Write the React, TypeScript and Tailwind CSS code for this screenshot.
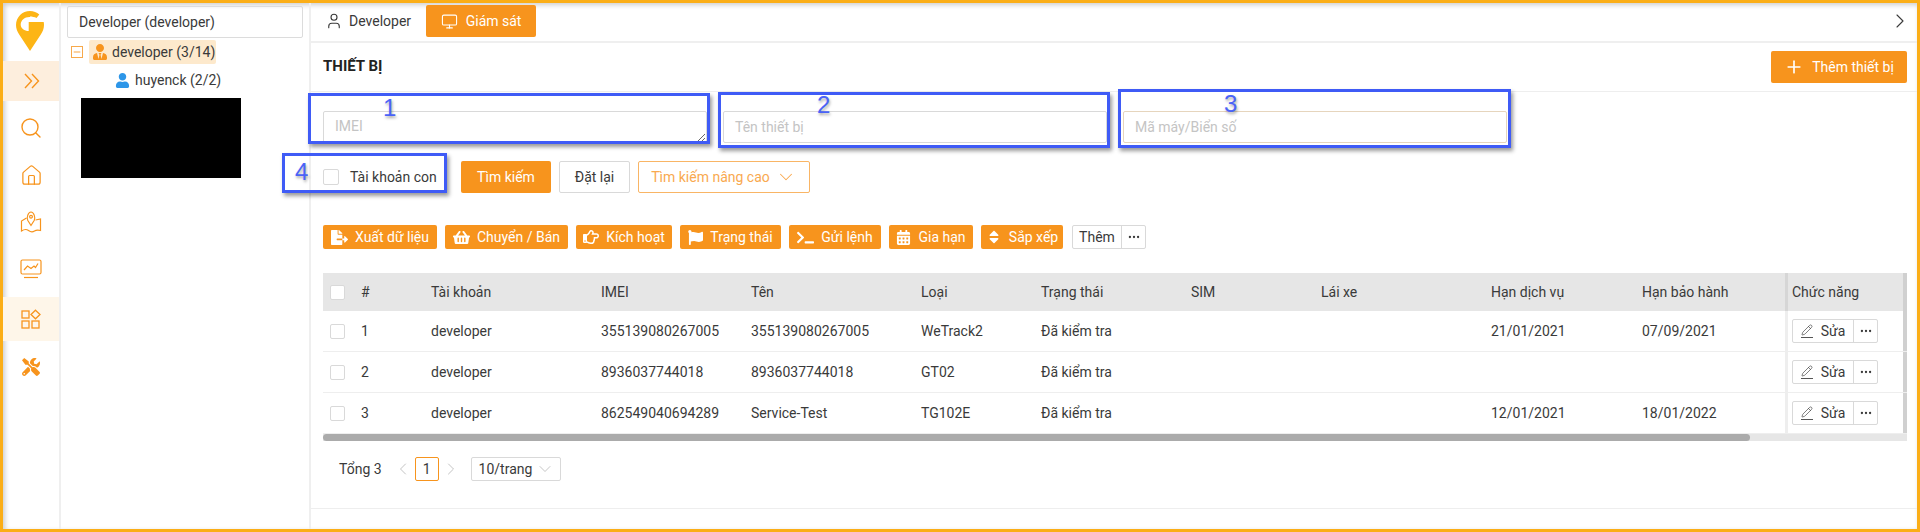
import React from "react";
import { ChevronRight, ChevronLeft, ChevronDown, Search, Home, Monitor, User, Plus, Pencil, Ellipsis, Minus } from "lucide-react";
import { FaFileExport, FaShoppingBasket, FaRegHandPointRight, FaFlag, FaTerminal, FaCalendarAlt, FaSort, FaUser, FaUserTie, FaTools } from "react-icons/fa";

const rows = [
  ["1", "developer", "355139080267005", "355139080267005", "WeTrack2", "Đã kiểm tra", "", "", "21/01/2021", "07/09/2021"],
  ["2", "developer", "8936037744018", "8936037744018", "GT02", "Đã kiểm tra", "", "", "", ""],
  ["3", "developer", "862549040694289", "Service-Test", "TG102E", "Đã kiểm tra", "", "", "12/01/2021", "18/01/2022"],
];
const heads = ["#", "Tài khoản", "IMEI", "Tên", "Loại", "Trạng thái", "SIM", "Lái xe", "Hạn dịch vụ", "Hạn bảo hành"];
const cols = "grid grid-cols-[38px_70px_170px_150px_170px_120px_150px_130px_170px_151px_143px_118px_4px] items-center";

const actions: [React.ReactNode, string, string][] = [
  [<FaFileExport size={17} />, "Xuất dữ liệu", "w-[114px]"],
  [<FaShoppingBasket size={17} />, "Chuyển / Bán", "w-[123px]"],
  [<FaRegHandPointRight size={16} />, "Kích hoạt", "w-[96px]"],
  [<FaFlag size={15} />, "Trạng thái", "w-[101px]"],
  [<FaTerminal size={17} />, "Gửi lệnh", "w-[92px]"],
  [<FaCalendarAlt size={15} />, "Gia hạn", "w-[84px]"],
  [<FaSort size={16} />, "Sắp xếp", "w-[82px]"],
];

function Box() {
  return <span className="block w-[15px] h-[15px] rounded-[2px] border border-[#d9d9d9] bg-white" />;
}

function Logo() {
  return (
    <svg width="28" height="40" viewBox="0 0 28 40">
      <path d="M14 0C6.300 0 0 6.200 0 14c0 3.600 1.300 6.700 3.200 9.500L14 40l10.800-16.500c2-2.800 3.200-5.900 3.200-9.500 0-1-.1-2-.3-3H14z" fill="#fdb515" />
      <path d="M13.500 6C8.500 6 4.700 9.500 4.700 13.500S8.500 20 12.700 20v-9H28V8l-4-1.500C21 6 17 6 13.500 6z" fill="#fff" />
      <path d="M20.500 0h7.500v8l-6-2-2-3z" fill="#fff" />
      <path d="M14 0c3.600 0 6.800 1.400 9.300 3.600L20.500 7c-1.800-1-4.200-1.500-7-1.500z" fill="#fdb515" />
    </svg>
  );
}

function DoubleChevron() {
  return (
    <svg width="16" height="16" viewBox="0 0 16 16" fill="none" stroke="#f7941d" strokeWidth="1.400">
      <path d="M1 1l6.500 7L1 15" />
      <path d="M8 1l6.500 7L8 15" />
    </svg>
  );
}

function MapIcon() {
  return (
    <svg width="22" height="22" viewBox="0 0 22 22" fill="none" stroke="#f7941d" strokeWidth="1.200">
      <path d="M11 14.500 7.700 9.300C6.500 6.500 8 1 11 1s4.500 5.500 3.300 8.300z" />
      <circle cx="11" cy="5.700" r="1.400" />
      <path d="M6.500 7 1.500 10v10c3-2 5-2 7-.5s4.500 1.500 6 .5 4-1 6-.5V8l-5 1" />
    </svg>
  );
}

function ChartIcon() {
  return (
    <svg width="22" height="20" viewBox="0 0 22 20" fill="none" stroke="#f7941d" strokeWidth="1.200">
      <rect x="1" y="1" width="20" height="14" rx="1.500" />
      <path d="M4 11l3.500-4 3.500 2.500L14 7l1.500 1.500L18 4.500" />
      <path d="M4 18.500h14" />
    </svg>
  );
}

function GridIcon() {
  return (
    <svg width="20" height="20" viewBox="0 0 20 20" fill="none" stroke="#f7941d" strokeWidth="1.300">
      <rect x="1" y="2" width="7" height="7" />
      <rect x="1" y="12" width="7" height="7" />
      <rect x="11" y="12" width="7" height="7" />
      <path d="M14.500 1.200 19 5.500l-4.500 4.300L10 5.500z" />
    </svg>
  );
}

function Btn({ className, children }: { className: string; children: React.ReactNode }) {
  return <div className={`flex items-center justify-center rounded-[2px] text-sm ${className}`}>{children}</div>;
}

export default function App() {
  return (
    <div className="relative w-[1920px] h-[532px] overflow-hidden bg-white text-[#3a3a3a] text-sm [font-family:Roboto,'Noto_Sans',sans-serif]">
      <div className="flex h-full border-[3px] border-[#fbae17] shadow-[inset_2px_2px_5px_rgba(0,0,0,0.2)]">
        <aside className="w-[56px] shrink-0 flex flex-col items-stretch">
          <div className="h-[58px] pl-[13px] pt-[8px]"><Logo /></div>
          <div className="h-[40px] mr-[-1px] flex items-center justify-center bg-[#fdeedd]"><DoubleChevron /></div>
          <div className="h-[54px] flex items-center justify-center text-[#f7941d]"><Search size={24} strokeWidth={1.400} /></div>
          <div className="h-[40px] flex items-center justify-center text-[#f7941d]"><Home size={23} strokeWidth={1.300} /></div>
          <div className="h-[54px] flex items-center justify-center"><MapIcon /></div>
          <div className="h-[40px] flex items-center justify-center"><ChartIcon /></div>
          <div className="h-[44px] mt-[8px] flex items-center justify-center bg-[#fef6e9]"><GridIcon /></div>
          <div className="h-[52px] flex items-center justify-center text-[#f7941d]"><FaTools size={18} /></div>
        </aside>
        <section className="w-[252px] shrink-0 border-x-2 border-[#efefef] pl-[6px] pt-[3px]">
          <div className="w-[236px] h-[32px] border border-[#dcdcdc] rounded-[2px] flex items-center pl-[11px]">Developer (developer)</div>
          <div className="mt-[2px] h-[24px] flex items-center">
            <span className="ml-[4px] w-[12px] h-[12px] border border-[#f7a94b] flex items-center justify-center text-[#f7941d]"><Minus size={10} /></span>
            <span className="ml-[6px] w-[127px] h-[24px] rounded-[2px] bg-[#fde9cc] flex items-center pl-[3px] gap-[4px] whitespace-nowrap"><FaUserTie size={16} className="text-[#f7941d] shrink-0" />developer (3/14)</span>
          </div>
          <div className="h-[32px] flex items-center pl-[48px] gap-[5px]"><FaUser size={15} className="text-[#2d96e8]" />huyenck (2/2)</div>
          <div className="mt-[2px] ml-[14px] w-[160px] h-[80px] bg-black" />
        </section>
        <main className="flex-1 min-w-0 flex flex-col">
          <div className="h-[40px] shrink-0 flex items-center border-b-2 border-[#efefef] pl-[14px] pr-[5px] pb-[2px]">
            <User size={18} className="mr-[6px]" strokeWidth={1.500} />
            <span>Developer</span>
            <div className="ml-[15px] w-[110px] h-[32px] rounded-[2px] bg-[#f7941d] text-white flex items-center justify-center gap-[8px]"><Monitor size={17} strokeWidth={1.500} />Giám sát</div>
            <ChevronRight size={24} strokeWidth={1.100} className="ml-auto" />
          </div>
          <div className="flex-1 flex flex-col border-b border-[#eeeeee] mb-[20px]">
            <div className="h-[49px] shrink-0 flex items-center justify-between border-b border-[#eeeeee] pl-[12px] pr-[10px]">
              <span className="text-[15px] font-bold text-[#222]">THIẾT BỊ</span>
              <Btn className="w-[136px] h-[32px] bg-[#f7941d] text-white gap-[8px]"><Plus size={20} strokeWidth={2} />Thêm thiết bị</Btn>
            </div>
            <div className="pl-[12px] pr-[10px] pt-[19px] flex-1">
              <div className="flex gap-[16px]">
                <textarea readOnly placeholder="IMEI" className="w-[384px] h-[32px] border border-[#d9d9d9] rounded-[2px] px-[11px] py-[4px] text-sm placeholder:text-[#c4c4c4] outline-none" />
                <div className="w-[384px] h-[32px] border border-[#d9d9d9] rounded-[2px] flex items-center px-[11px] text-[#c4c4c4]">Tên thiết bị</div>
                <div className="w-[384px] h-[32px] border border-[#e6d5bd] rounded-[2px] flex items-center px-[11px] text-[#c4c4c4]">Mã máy/Biển số</div>
              </div>
              <div className="mt-[18px] h-[32px] flex items-center">
                <span className="block w-[16px] h-[16px] rounded-[2px] border border-[#d9d9d9]" />
                <span className="ml-[11px] w-[111px]">Tài khoản con</span>
                <Btn className="w-[90px] h-[32px] bg-[#f7941d] text-white">Tìm kiếm</Btn>
                <Btn className="ml-[8px] w-[71px] h-[32px] border border-[#d9d9d9]">Đặt lại</Btn>
                <Btn className="ml-[8px] w-[172px] h-[32px] border border-[#f9b565] text-[#f9a94f] gap-[5px]">Tìm kiếm nâng cao<ChevronDown size={22} strokeWidth={1.100} /></Btn>
              </div>
              <div className="mt-[32px] h-[24px] flex items-center gap-[8px]">
                {actions.map(([icon, label, w]) => (
                  <Btn key={label} className={`${w} h-[24px] bg-[#f7941d] text-white gap-[7px]`}>{icon}<span>{label}</span></Btn>
                ))}
                <div className="ml-[1px] h-[24px] w-[74px] flex border border-[#d9d9d9] rounded-[2px]">
                  <span className="flex-1 flex items-center justify-center border-r border-[#d9d9d9]">Thêm</span>
                  <span className="w-[23px] flex items-center justify-center"><Ellipsis size={14} /></span>
                </div>
              </div>
              <div className="mt-[24px] w-[1584px]">
                <div className={`${cols} h-[38px] bg-[#e6e6e6]`}>
                  <div className="pl-[7px]"><Box /></div>
                  {heads.map((h) => <div key={h}>{h}</div>)}
                  <div className="h-full flex items-center pl-[4px] border-l-[3px] border-[#d6d6d6]">Chức năng</div>
                  <div className="h-full bg-[#d0d0d0]" />
                </div>
                {rows.map((r) => (
                  <div key={r[0]} className={`${cols} h-[41px] border-b border-[#eeeeee] last:border-b-0`}>
                    <div className="pl-[7px]"><Box /></div>
                    {r.map((c, i) => <div key={i}>{c}</div>)}
                    <div className="h-full flex items-center pl-[4px] border-l-[3px] border-[#eeeeee]">
                      <div className="flex h-[24px] border border-[#d9d9d9] rounded-[2px]">
                        <span className="w-[61px] flex items-center justify-center gap-[8px] border-r border-[#d9d9d9]"><span className="border-b border-[#555] leading-[0] pb-[1px]"><Pencil size={12} strokeWidth={1.300} /></span>Sửa</span>
                        <span className="w-[23px] flex items-center justify-center"><Ellipsis size={14} /></span>
                      </div>
                    </div>
                    <div className="h-full bg-[#d0d0d0]" />
                  </div>
                ))}
                <div className="h-[7px] bg-[#e6e6e6]">
                  <div className="w-[1427px] h-full bg-[#ababab] rounded-full" />
                </div>
              </div>
              <div className="mt-[16px] pl-[16px] h-[24px] flex items-center">
                <span>Tổng 3</span>
                <ChevronLeft size={20} strokeWidth={1.100} className="ml-[11px] text-[#bdbdbd]" />
                <span className="ml-[2px] w-[24px] h-[24px] border border-[#f7941d] rounded-[2px] flex items-center justify-center">1</span>
                <ChevronRight size={20} strokeWidth={1.100} className="ml-[2px] text-[#bdbdbd]" />
                <div className="ml-[10px] w-[90px] h-[24px] border border-[#d9d9d9] rounded-[2px] flex items-center pl-[7px] gap-[3px]">10/trang<ChevronDown size={20} strokeWidth={1} className="text-[#bbb]" /></div>
              </div>
            </div>
          </div>
        </main>
      </div>

      <div className="absolute left-[308px] top-[93px] w-[402px] h-[51px] border-[3px] border-[#3f5bf6] shadow-[2px_3px_4px_rgba(0,0,0,0.4)]" />
      <div className="absolute left-[718px] top-[92px] w-[392px] h-[56px] border-[3px] border-[#3f5bf6] shadow-[2px_3px_4px_rgba(0,0,0,0.4)]" />
      <div className="absolute left-[1118px] top-[89px] w-[393px] h-[59px] border-[3px] border-[#3f5bf6] shadow-[2px_3px_4px_rgba(0,0,0,0.4)]" />
      <div className="absolute left-[282px] top-[153px] w-[165px] h-[40px] border-[3px] border-[#3f5bf6] shadow-[2px_3px_4px_rgba(0,0,0,0.4)]" />
      <span className="absolute left-[383px] top-[94px] text-[24px] leading-[28px] text-[#4a63f7] [font-family:'Liberation_Sans',sans-serif] [text-shadow:1px_2px_3px_rgba(0,0,0,0.35)]">1</span>
      <span className="absolute left-[817px] top-[91px] text-[24px] leading-[28px] text-[#4a63f7] [font-family:'Liberation_Sans',sans-serif] [text-shadow:1px_2px_3px_rgba(0,0,0,0.35)]">2</span>
      <span className="absolute left-[1224px] top-[90px] text-[24px] leading-[28px] text-[#4a63f7] [font-family:'Liberation_Sans',sans-serif] [text-shadow:1px_2px_3px_rgba(0,0,0,0.35)]">3</span>
      <span className="absolute left-[295px] top-[158px] text-[24px] leading-[28px] text-[#4a63f7] [font-family:'Liberation_Sans',sans-serif] [text-shadow:1px_2px_3px_rgba(0,0,0,0.35)]">4</span>
    </div>
  );
}
